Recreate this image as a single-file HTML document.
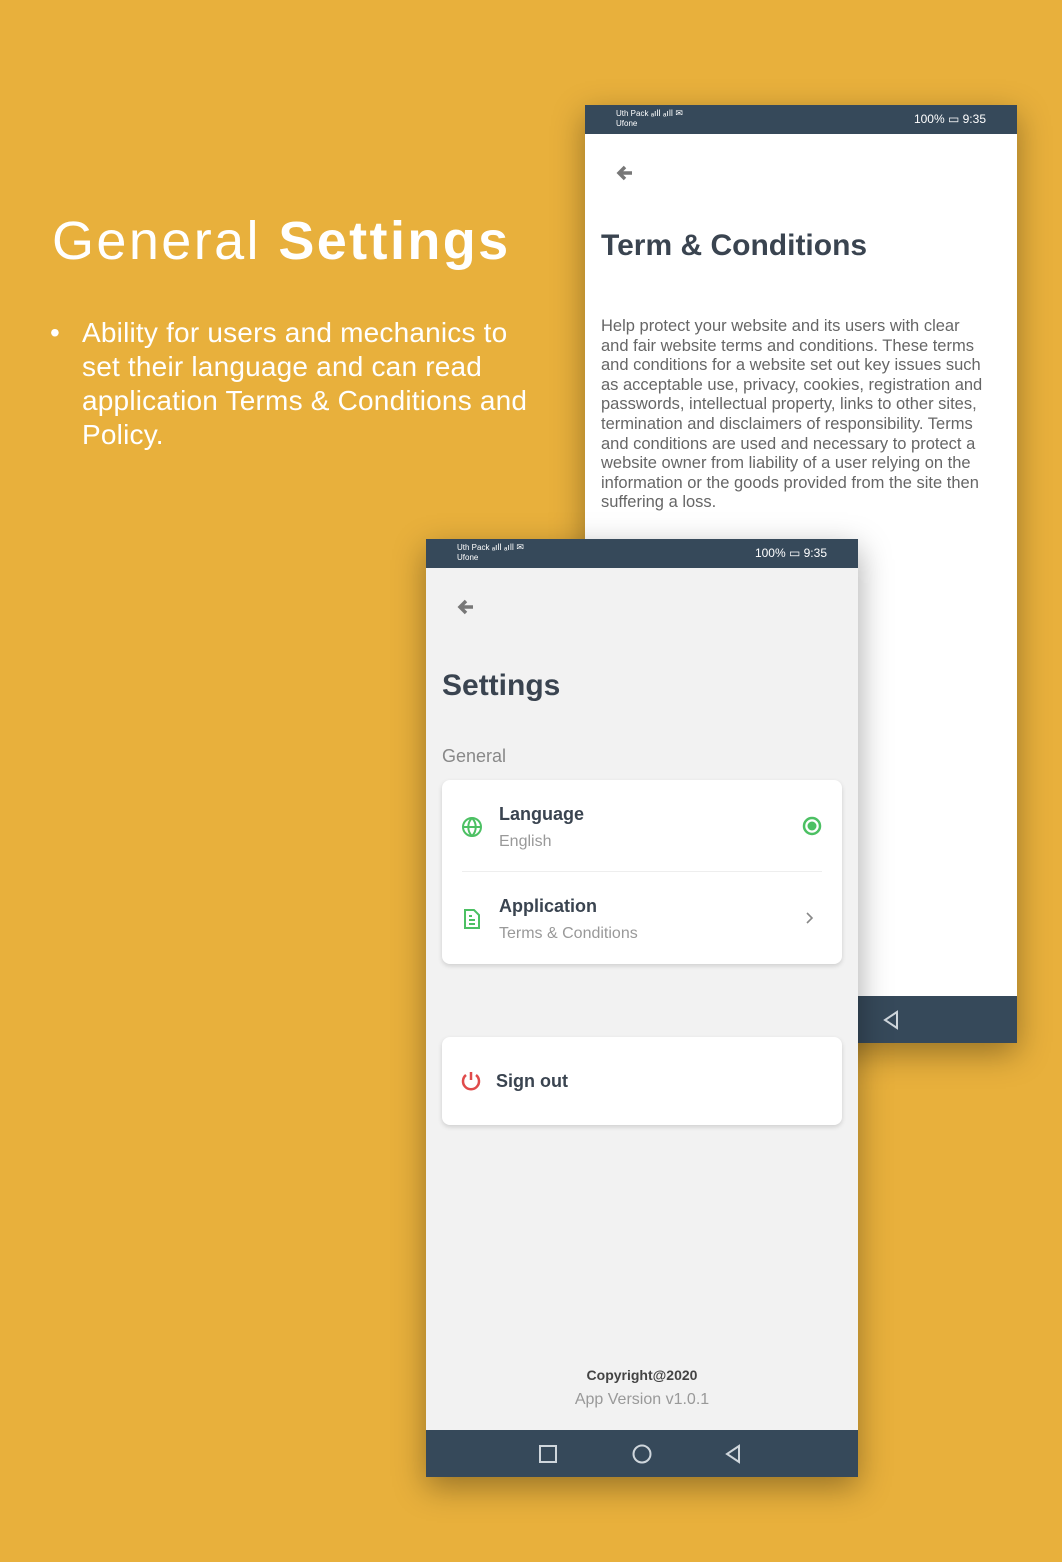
<!DOCTYPE html>
<html><head><meta charset="utf-8"><style>
*{margin:0;padding:0;box-sizing:border-box}
body{width:1062px;height:1562px;background:#E8B03C;font-family:"Liberation Sans",sans-serif;position:relative;overflow:hidden}
.abs{position:absolute}
.phone{position:absolute;width:432px;box-shadow:0 10px 30px rgba(0,0,0,.35)}
.sb{position:absolute;left:0;top:0;width:432px;height:29px;background:#36495A;color:#fff}
.sb .l{position:absolute;left:31px;top:3px;font-size:8px;line-height:10px}
.sb .r{position:absolute;right:31px;top:7px;font-size:12px}
.nav{position:absolute;left:0;width:432px;height:47px;background:#36495A}
.card{position:absolute;left:16px;width:400px;background:#fff;border-radius:8px;box-shadow:0 2px 5px rgba(0,0,0,.15)}
</style></head><body>
<div class="abs" style="left:52px;top:210px;font-size:54px;color:#fff;letter-spacing:2.4px;white-space:nowrap"><span style="font-weight:300">General </span><b>Settings</b></div>
<div class="abs" style="left:50px;top:316px;width:520px;font-size:28px;line-height:34px;color:#fff;letter-spacing:0.2px;white-space:nowrap">
<span class="abs" style="left:0;top:0">•</span>
<div style="margin-left:32px">Ability for users and mechanics to<br>set their language and can read<br>application Terms &amp; Conditions and<br>Policy.</div></div>

<div class="phone" style="left:585px;top:105px;height:938px;background:#fff">
<div class="sb"><div class="l">Uth Pack <span style="font-size:9px">ₐıll ₐıll ✉</span><br>Ufone</div><div class="r">100% ▭ 9:35</div></div>
<svg class="abs" style="left:30px;top:58px" width="20" height="20" viewBox="0 0 20 20"><path d="M17 10H5M10 4L4 10l6 6" stroke="#777" stroke-width="3.5" fill="none"/></svg>
<div class="abs" style="left:16px;top:124px;font-size:30px;font-weight:bold;color:#3a4450">Term &amp; Conditions</div>
<div class="abs" style="left:16px;top:212px;width:410px;font-size:16.5px;line-height:19.6px;color:#666;white-space:nowrap">Help protect your website and its users with clear<br>and fair website terms and conditions. These terms<br>and conditions for a website set out key issues such<br>as acceptable use, privacy, cookies, registration and<br>passwords, intellectual property, links to other sites,<br>termination and disclaimers of responsibility. Terms<br>and conditions are used and necessary to protect a<br>website owner from liability of a user relying on the<br>information or the goods provided from the site then<br>suffering a loss.</div>
<div class="nav" style="top:891px"><svg class="abs" style="left:296px;top:14px" width="20" height="20"><path d="M16 2L4 10l12 8z" stroke="#cfd6dc" stroke-width="2" fill="none"/></svg></div>
</div>

<div class="phone" style="left:426px;top:539px;height:938px;background:#f2f2f2">
<div class="sb"><div class="l">Uth Pack <span style="font-size:9px">ₐıll ₐıll ✉</span><br>Ufone</div><div class="r">100% ▭ 9:35</div></div>
<svg class="abs" style="left:30px;top:58px" width="20" height="20" viewBox="0 0 20 20"><path d="M17 10H5M10 4L4 10l6 6" stroke="#777" stroke-width="3.5" fill="none"/></svg>
<div class="abs" style="left:16px;top:130px;font-size:30px;font-weight:bold;color:#3a4450">Settings</div>
<div class="abs" style="left:16px;top:207px;font-size:18px;color:#888">General</div>
<div class="card" style="top:241px;height:184px">
<svg class="abs" style="left:19px;top:36px" width="22" height="22" viewBox="0 0 22 22" fill="none" stroke="#4cc063" stroke-width="2"><circle cx="11" cy="11" r="9"/><path d="M2 11h18M11 2c-5 5-5 13 0 18M11 2c5 5 5 13 0 18"/></svg>
<div class="abs" style="left:57px;top:24px;font-size:18px;font-weight:bold;color:#3a4450">Language</div>
<div class="abs" style="left:57px;top:53px;font-size:16px;color:#999">English</div>
<svg class="abs" style="left:359px;top:35px" width="22" height="22"><circle cx="11" cy="11" r="8" stroke="#4cc063" stroke-width="2.5" fill="none"/><circle cx="11" cy="11" r="4.5" fill="#4cc063"/></svg>
<div class="abs" style="left:20px;top:91px;width:360px;height:1px;background:#eee"></div>
<svg class="abs" style="left:21px;top:128px" width="18" height="22" viewBox="0 0 18 22" fill="none" stroke="#4cc063" stroke-width="2"><path d="M2 2h9l5 5v13H2z M6 12h6M6 16h6M6 8h3"/></svg>
<div class="abs" style="left:57px;top:116px;font-size:18px;font-weight:bold;color:#3a4450">Application</div>
<div class="abs" style="left:57px;top:145px;font-size:16px;color:#999">Terms &amp; Conditions</div>
<svg class="abs" style="left:363px;top:131px" width="10" height="14"><path d="M2 2l5 5-5 5" stroke="#888" stroke-width="1.6" fill="none"/></svg>
</div>
<div class="card" style="top:498px;height:88px">
<svg class="abs" style="left:18px;top:33px" width="22" height="22" viewBox="0 0 22 22" fill="none" stroke="#e04b4b" stroke-width="2.5"><path d="M11 2v8M6 5a8 8 0 1 0 10 0"/></svg>
<div class="abs" style="left:54px;top:34px;font-size:18px;font-weight:bold;color:#3a4450">Sign out</div>
</div>
<div class="abs" style="left:0;width:432px;top:828px;text-align:center;font-size:14px;font-weight:bold;color:#444">Copyright@2020</div>
<div class="abs" style="left:0;width:432px;top:852px;text-align:center;font-size:16px;color:#999">App Version v1.0.1</div>
<div class="nav" style="top:891px">
<svg class="abs" style="left:112px;top:14px" width="20" height="20"><rect x="2" y="2" width="16" height="16" stroke="#cfd6dc" stroke-width="2" fill="none"/></svg>
<svg class="abs" style="left:205px;top:14px" width="22" height="22"><circle cx="11" cy="10" r="8.5" stroke="#cfd6dc" stroke-width="2" fill="none"/></svg>
<svg class="abs" style="left:297px;top:14px" width="20" height="20"><path d="M16 2L4 10l12 8z" stroke="#cfd6dc" stroke-width="2" fill="none"/></svg>
</div>
</div>
</body></html>
